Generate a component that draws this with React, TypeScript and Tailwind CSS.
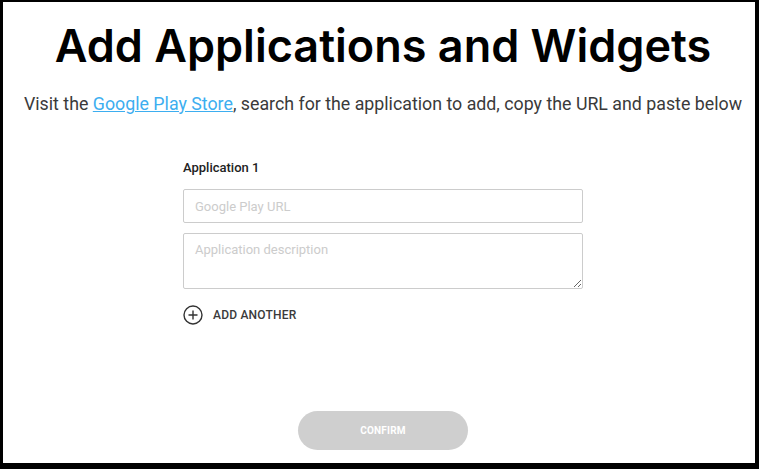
import { useState } from "react";

export default function App() {
  const [url, setUrl] = useState("");
  const [desc, setDesc] = useState("");

  return (
    <div className="h-[469px] w-[759px] bg-white border-black border-t-2 border-l-[3px] border-r-4 border-b-[6px] pl-[8px] flex flex-col items-center font-['Roboto',sans-serif]">
      <h1 className="mt-[16px] text-[45px] leading-[56px] font-semibold text-black font-['Inter',sans-serif]">
        Add Applications and Widgets
      </h1>
      <p className="mt-[19px] text-[17.8px] leading-[22px] text-[#3a3a3a]">
        Visit the{" "}
        <a href="#" className="text-[#3daef0] underline">
          Google Play Store
        </a>
        , search for the application to add, copy the URL and paste below
      </p>

      <div className="mt-[44px] w-[400px] flex flex-col">
        <label className="text-[13px] leading-[18px] font-medium text-[#222]">
          Application 1
        </label>
        <input
          value={url}
          onChange={(e) => setUrl(e.target.value)}
          placeholder="Google Play URL"
          className="mt-[12px] h-[34px] w-full rounded-[2px] border border-[#ccc] px-[11px] text-[13px] text-[#333] placeholder:text-[#ccc] outline-none"
        />
        <textarea
          value={desc}
          onChange={(e) => setDesc(e.target.value)}
          placeholder="Application description"
          className="mt-[10px] h-[56px] w-full rounded-[2px] border border-[#ccc] px-[11px] py-[7px] text-[13px] leading-[18px] text-[#333] placeholder:text-[#ccc] outline-none"
        />
        <button className="mt-[16px] flex items-center gap-[10px] text-[12px] font-medium text-[#3a3a3a] tracking-[0.2px]">
          <svg width="20" height="20" viewBox="0 0 20 20" fill="none" stroke="#333" strokeWidth="1.4">
            <circle cx="10" cy="10" r="9" />
            <path d="M10 5.5v9M5.5 10h9" />
          </svg>
          ADD ANOTHER
        </button>
      </div>

      <div className="flex-1" />
      <button className="mb-[13px] h-[39px] w-[170px] rounded-full bg-[#cfcfcf] text-[10px] font-bold text-white tracking-[0.2px]">
        CONFIRM
      </button>
    </div>
  );
}
